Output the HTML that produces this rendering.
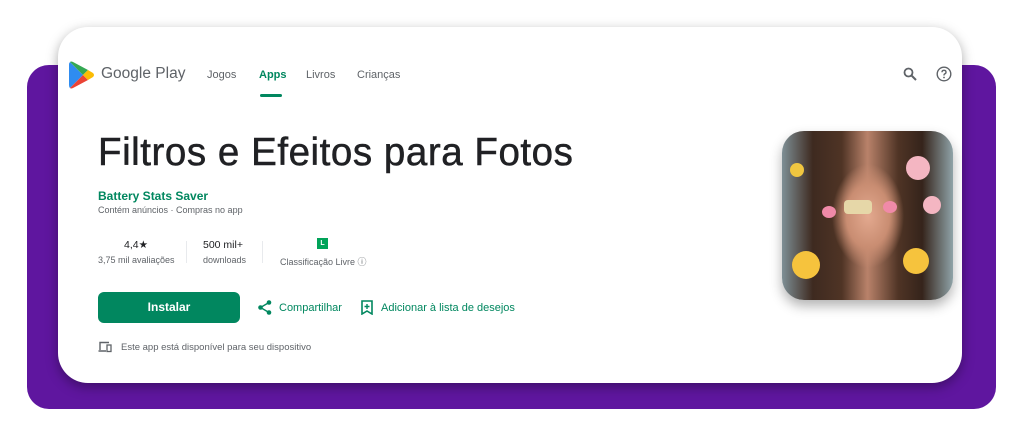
<!DOCTYPE html>
<html><head><meta charset="utf-8"><style>
*{margin:0;padding:0;box-sizing:border-box}
body{width:1024px;height:440px;background:#fff;position:relative;overflow:hidden;font-family:"Liberation Sans",sans-serif;color:#202124}
.purple{position:absolute;left:27px;top:65px;width:969px;height:344px;background:#5f169f;border-radius:22px}
.card{position:absolute;left:58px;top:27px;width:904px;height:356px;background:#fff;border-radius:30px;box-shadow:0 4px 12px rgba(0,0,0,.35)}
.abs{position:absolute;white-space:nowrap}
.nav{font-size:11px;color:#5f6368;top:69px}
.g{color:#01875f}
.icon{position:absolute;left:782px;top:131px;width:171px;height:169px;border-radius:22px;overflow:hidden;box-shadow:0 6px 12px rgba(0,0,0,.3);
background:radial-gradient(ellipse 36px 52px at 86px 85px,#e3a98f 0%,#c98d72 60%,transparent 100%),linear-gradient(90deg,#7e8f95 0%,#3e2a20 18%,#4f3425 35%,#b9826a 50%,#4f3425 68%,#35241b 82%,#8fa3a8 100%)}
.em{position:absolute;border-radius:50%}
</style></head><body>
<div class="purple"></div>
<div class="card"></div>
<svg class="abs" style="left:69px;top:61px" width="26" height="28" viewBox="0 0 26 28">
<path d="M1 1 L14 14 L1 27 Q0 26 0 24 V4 Q0 2 1 1Z" fill="#2f8cf0"/>
<path d="M1 1 Q2 0 4 1 L19 9 L14 14Z" fill="#34a853"/>
<path d="M1 27 L14 14 L19 19 L4 27 Q2 28 1 27Z" fill="#ea4335"/>
<path d="M19 9 L24 12 Q26 14 24 16 L19 19 L14 14Z" fill="#fbbc04"/>
</svg>
<div class="abs" style="left:101px;top:65px;font-size:15.5px;color:#5f6368">Google Play</div>
<div class="abs nav" style="left:207px">Jogos</div>
<div class="abs nav g" style="left:259px;font-weight:bold">Apps</div>
<div style="position:absolute;left:260px;top:94px;width:22px;height:3px;background:#01875f;border-radius:2px"></div>
<div class="abs nav" style="left:306px">Livros</div>
<div class="abs nav" style="left:357px">Crianças</div>
<svg class="abs" style="left:903px;top:67px" width="14" height="14" viewBox="0 0 14 14"><circle cx="5.5" cy="5.5" r="4" stroke="#5f6368" stroke-width="1.8" fill="none"/><path d="M8.5 8.5 L13 13" stroke="#5f6368" stroke-width="2"/></svg>
<svg class="abs" style="left:936px;top:66px" width="16" height="16" viewBox="0 0 16 16"><circle cx="8" cy="8" r="6.8" stroke="#5f6368" stroke-width="1.4" fill="none"/><path d="M6 6.3 Q6 4.3 8 4.3 Q10 4.3 10 6.2 Q10 7.4 8.5 8 Q8 8.3 8 9.5" stroke="#5f6368" stroke-width="1.4" fill="none"/><circle cx="8" cy="11.5" r=".9" fill="#5f6368"/></svg>
<div class="abs" style="left:98px;top:131px;font-size:38.5px;font-weight:500;letter-spacing:0.55px;-webkit-text-stroke:0.5px #202124">Filtros e Efeitos para Fotos</div>
<div class="abs g" style="left:98px;top:189px;font-size:12px;font-weight:bold">Battery Stats Saver</div>
<div class="abs" style="left:98px;top:205px;font-size:9px;color:#5f6368">Contém anúncios · Compras no app</div>
<div class="abs" style="left:124px;top:239px;font-size:10.5px;font-weight:500">4,4★</div>
<div class="abs" style="left:98px;top:255px;font-size:9px;color:#5f6368">3,75 mil avaliações</div>
<div style="position:absolute;left:186px;top:241px;width:1px;height:22px;background:#e8eaed"></div>
<div class="abs" style="left:203px;top:239px;font-size:10.5px;font-weight:500">500 mil+</div>
<div class="abs" style="left:203px;top:255px;font-size:9px;color:#5f6368">downloads</div>
<div style="position:absolute;left:262px;top:241px;width:1px;height:22px;background:#e8eaed"></div>
<div class="abs" style="left:317px;top:238px;width:11px;height:11px;background:#01a359;color:#fff;font-size:7px;font-weight:bold;text-align:center;line-height:11px">L</div>
<div class="abs" style="left:280px;top:255px;font-size:9px;color:#5f6368">Classificação Livre ⓘ</div>
<div class="abs" style="left:98px;top:292px;width:142px;height:31px;background:#01875f;border-radius:6px;color:#fff;font-size:12px;font-weight:bold;text-align:center;line-height:31px">Instalar</div>
<svg class="abs" style="left:258px;top:300px" width="14" height="15" viewBox="0 0 14 15"><circle cx="11" cy="2.5" r="2.3" fill="#01875f"/><circle cx="2.5" cy="7.5" r="2.3" fill="#01875f"/><circle cx="11" cy="12.5" r="2.3" fill="#01875f"/><path d="M11 2.5 L2.5 7.5 L11 12.5" stroke="#01875f" stroke-width="1.4" fill="none"/></svg>
<div class="abs g" style="left:279px;top:302px;font-size:11px;font-weight:500">Compartilhar</div>
<svg class="abs" style="left:361px;top:300px" width="12" height="15" viewBox="0 0 12 15"><path d="M1 1 H11 V14 L6 11 L1 14Z" stroke="#01875f" stroke-width="1.6" fill="none"/><path d="M6 4 V9 M3.5 6.5 H8.5" stroke="#01875f" stroke-width="1.4"/></svg>
<div class="abs g" style="left:381px;top:302px;font-size:11px;font-weight:500">Adicionar à lista de desejos</div>
<svg class="abs" style="left:98px;top:341px" width="14" height="12" viewBox="0 0 14 12"><path d="M2 9 V1.5 H11 M0.5 10 H8" stroke="#5f6368" stroke-width="1.4" fill="none"/><rect x="9" y="4" width="4" height="6.5" stroke="#5f6368" stroke-width="1.3" fill="none"/></svg>
<div class="abs" style="left:121px;top:342px;font-size:9.5px;color:#5f6368">Este app está disponível para seu dispositivo</div>
<div class="icon">
<div class="em" style="left:10px;top:120px;width:28px;height:28px;background:#f6c33d"></div>
<div class="em" style="left:121px;top:117px;width:26px;height:26px;background:#f6c33d"></div>
<div class="em" style="left:124px;top:25px;width:24px;height:24px;background:#f4b6c2"></div>
<div class="em" style="left:141px;top:65px;width:18px;height:18px;background:#f4b6c2"></div>
<div class="em" style="left:8px;top:32px;width:14px;height:14px;background:#f0c640"></div>
<div class="em" style="left:40px;top:75px;width:14px;height:12px;background:#f08aa8"></div>
<div class="em" style="left:101px;top:70px;width:14px;height:12px;background:#f08aa8"></div>
<div style="position:absolute;left:62px;top:69px;width:28px;height:14px;background:#e6d7a8;border-radius:4px"></div>
</div>
</body></html>
